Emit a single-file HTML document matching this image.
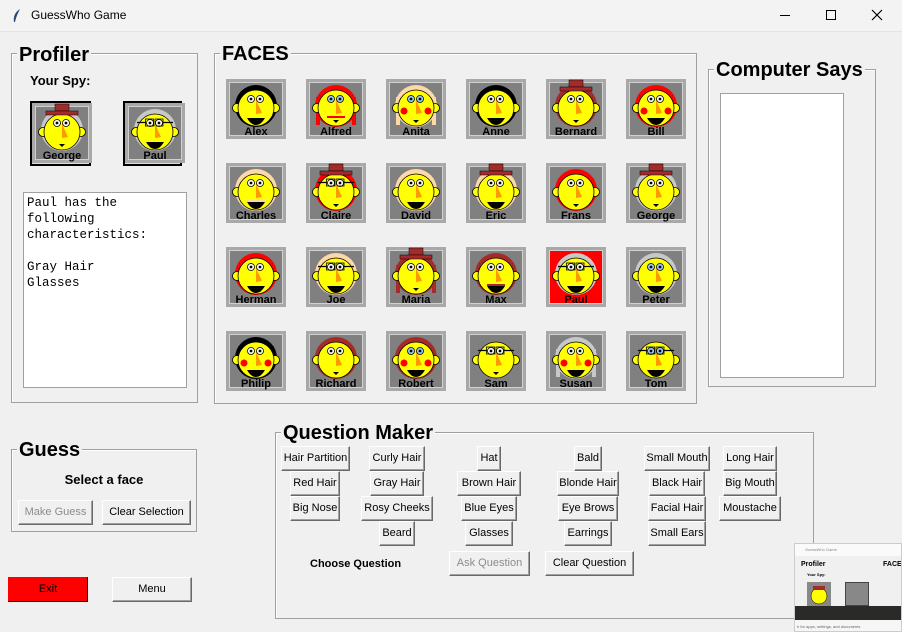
<!DOCTYPE html>
<html><head><meta charset="utf-8">
<style>
*{box-sizing:border-box}
body{margin:0;width:902px;height:632px;background:#f0f0f0;font-family:"Liberation Sans",sans-serif;position:relative;overflow:hidden}
.a{position:absolute}
.title{left:0;top:0;width:902px;height:32px;background:#f3f3f3;border-bottom:1px solid #e4e4e4}
.frame{position:absolute;border:1px solid #a0a0a0;box-shadow:inset 1px 1px 0 #fff}
.lbl{position:absolute;font-weight:bold;font-size:20px;background:#f0f0f0;padding:0 2px;line-height:20px;color:#000}
.btn{position:absolute;height:25px;font-size:11px;line-height:22px;text-align:center;background:#f0f0f0;border:1px solid;border-color:#fff #696969 #696969 #fff;box-shadow:inset -1px -1px 0 #a0a0a0;white-space:nowrap;color:#000;overflow:hidden}
.dis{color:#8c8c8c}
.tile{position:absolute;width:60px;height:60px}
.b{font-weight:bold;font-size:13px}
</style></head><body>
<div class="a title"></div>
<svg class="a" style="left:12px;top:8px" width="10" height="16" viewBox="0 0 10 16"><path d="M8 1 C3 4 1 9 2 14 L3 14 C4 9 6 5 8 1Z" fill="#2a4a7a"/></svg>
<div class="a" style="left:31px;top:8px;font-size:12px">GuessWho Game</div>
<div class="a" style="left:780px;top:15px;width:10px;height:1px;background:#000"></div>
<div class="a" style="left:826px;top:10px;width:10px;height:10px;border:1px solid #000"></div>
<svg class="a" style="left:871px;top:9px" width="12" height="12"><path d="M1 1L11 11M11 1L1 11" stroke="#000" stroke-width="1.2"/></svg>

<div class="frame" style="left:11px;top:53px;width:187px;height:350px"></div>
<div class="lbl" style="left:17px;top:45px">Profiler</div>
<div class="a b" style="left:30px;top:73px">Your Spy:</div>
<div id="spy1" class="a" style="left:30px;top:101px;width:61px;height:65px;border:2px solid #000;background:#ddd"></div>
<div id="spy2" class="a" style="left:123px;top:101px;width:59px;height:65px;border:2px solid #000;background:#ddd"></div>
<div class="a" style="left:23px;top:192px;width:164px;height:196px;background:#fff;border:1px solid #a0a0a0;font-family:'Liberation Mono',monospace;font-size:12.5px;line-height:16px;padding:2px 3px;white-space:pre">Paul has the
following
characteristics:

Gray Hair
Glasses</div>

<div class="frame" style="left:214px;top:53px;width:483px;height:351px"></div>
<div class="lbl" style="left:220px;top:44px">FACES</div>
<div id="grid"></div>

<div class="frame" style="left:708px;top:69px;width:168px;height:318px"></div>
<div class="lbl" style="left:714px;top:60px">Computer Says</div>
<div class="a" style="left:720px;top:93px;width:124px;height:285px;background:#fff;border:1px solid #a0a0a0"></div>

<div class="frame" style="left:11px;top:449px;width:186px;height:83px"></div>
<div class="lbl" style="left:17px;top:440px">Guess</div>
<div class="a b" style="left:11px;width:186px;top:472px;text-align:center">Select a face</div>
<div class="btn dis" style="left:18px;top:500px;width:75px">Make Guess</div>
<div class="btn" style="left:102px;top:500px;width:89px">Clear Selection</div>
<div class="btn" style="left:8px;top:577px;width:80px;background:#f00;border-color:#f00 #000 #000 #f00;box-shadow:none">Exit</div>
<div class="btn" style="left:112px;top:577px;width:80px">Menu</div>

<div class="frame" style="left:275px;top:432px;width:539px;height:187px"></div>
<div class="lbl" style="left:281px;top:423px">Question Maker</div>
<div id="qm"></div>
<div class="a" style="left:310px;top:558px;font-size:11px;font-weight:bold">Choose Question</div>
<div class="btn dis" style="left:449px;top:551px;width:81px">Ask Question</div>
<div class="btn" style="left:545px;top:551px;width:89px">Clear Question</div>

<div class="a" style="left:794px;top:543px;width:108px;height:89px;background:#f0f0f0;border:1px solid #ccc;overflow:hidden">
<div class="a" style="left:0;top:0;width:108px;height:12px;background:#fafafa;font-size:4px;padding:3px 10px;color:#888">GuessWho Game</div>
<div class="a" style="left:6px;top:17px;font-size:7px;font-weight:bold">Profiler</div>
<div class="a" style="left:12px;top:28px;font-size:4px;font-weight:bold">Your Spy:</div>
<div class="a" style="left:12px;top:38px;width:24px;height:24px;background:#888"><svg width="24" height="24"><circle cx="12" cy="14" r="8" fill="#ff0" stroke="#000" stroke-width=".5"/><rect x="6" y="4" width="12" height="4" fill="#a52a2a"/></svg></div>
<div class="a" style="left:50px;top:38px;width:24px;height:24px;background:#888;border:1px solid #444"></div>
<div class="a" style="left:88px;top:17px;font-size:7px;font-weight:bold">FACE</div>
<div class="a" style="left:0;top:62px;width:108px;height:14px;background:#2a2a28"></div>
<div class="a" style="left:0;top:76px;width:108px;height:13px;background:#f6f6f6;font-size:4px;padding:4px 2px;color:#666">h for apps, settings, and documents</div>
</div>

<script>
function face(n,o){o=o||{};
var hair=o.h,s='';
var bg=o.bg||'#808080';
s+='<rect x="0" y="0" width="60" height="60" fill="#a8a8a8"/><rect x="3" y="3" width="54" height="54" fill="#d0d0d0"/><rect x="4" y="4" width="52" height="52" fill="'+bg+'"/>';
if(hair&&o.long) s+='<rect x="10" y="18" width="4" height="28" fill="'+hair+'"/><rect x="46" y="18" width="4" height="28" fill="'+hair+'"/>';
if(hair) s+='<circle cx="30" cy="27" r="21" fill="'+hair+'"/>';
s+='<circle cx="11" cy="29" r="4.5" fill="#ff0" stroke="#000" stroke-width=".8"/><circle cx="49" cy="29" r="4.5" fill="#ff0" stroke="#000" stroke-width=".8"/>';
s+='<circle cx="30" cy="29" r="18" fill="#ff0" stroke="#000" stroke-width=".8"/>';
if(o.hat) s+='<rect x="23" y="1" width="14" height="7" fill="#a52a2a" stroke="#000" stroke-width=".5"/><rect x="14" y="8" width="32" height="4" fill="#a52a2a" stroke="#000" stroke-width=".5"/>';
if(o.cheek) s+='<circle cx="18" cy="32" r="3.5" fill="#f00"/><circle cx="42" cy="32" r="3.5" fill="#f00"/>';
var ec=o.blue?'#9cf':'#fff';
s+='<circle cx="25" cy="20" r="3.5" fill="'+ec+'" stroke="#000" stroke-width=".8"/><circle cx="25" cy="20" r="1.4"/><circle cx="34" cy="20" r="3.5" fill="'+ec+'" stroke="#000" stroke-width=".8"/><circle cx="34" cy="20" r="1.4"/>';
if(o.gl) s+='<rect x="20.5" y="16" width="8" height="7" fill="none" stroke="#000" stroke-width=".8"/><rect x="30" y="16" width="8" height="7" fill="none" stroke="#000" stroke-width=".8"/><path d="M12 19.5H20.5M38 19.5H48" stroke="#000" stroke-width="1.3"/>';
s+='<path d="M30 21L36 34L30 35Z" fill="#f90"/>';
if(o.mous) s+='<rect x="21" y="37" width="18" height="2" fill="'+(o.mous)+'"/>';
if(o.small) s+='<path d="M27 41H33L30 44Z"/>';
else s+='<path d="M21 39H39Q35 46 30 46Q25 46 21 39Z"/>';
s+='<text x="30" y="56" text-anchor="middle" font-family="Liberation Sans,sans-serif" font-weight="bold" font-size="11" fill="#000">'+n+'</text>';
return '<svg width="60" height="60" viewBox="0 0 60 60">'+s+'</svg>';}
var K='#000',R='#f00',P='#fdd8a8',B='#a52a2a',G='#c8c8c8';
var F=[
['Alex',{h:K}],['Alfred',{h:R,long:1,blue:1,mous:R,small:1}],['Anita',{h:P,long:1,blue:1,cheek:1,small:1}],['Anne',{h:K}],['Bernard',{h:B,hat:1,small:1}],['Bill',{h:R,cheek:1}],
['Charles',{h:P,mous:P}],['Claire',{h:R,hat:1,gl:1,small:1}],['David',{h:P}],['Eric',{h:'#fdd8a8',hat:1}],['Frans',{h:R,small:1}],['George',{h:G,hat:1,small:1}],
['Herman',{h:R}],['Joe',{h:P,gl:1}],['Maria',{h:B,hat:1,long:1,small:1}],['Max',{h:B,mous:B}],['Paul',{h:G,gl:1,bg:'#f00'}],['Peter',{h:G,blue:1}],
['Philip',{h:K,cheek:1}],['Richard',{h:B,small:1}],['Robert',{h:B,blue:1,cheek:1}],['Sam',{gl:1,small:1}],['Susan',{h:G,long:1,cheek:1}],['Tom',{gl:1,blue:1}]];
var g='';F.forEach(function(f,i){g+='<div class="tile" style="left:'+(226+80*(i%6))+'px;top:'+(79+84*Math.floor(i/6))+'px">'+face(f[0],f[1])+'</div>';});
document.getElementById('grid').innerHTML=g;
document.getElementById('spy1').innerHTML=face('George',F[11][1]);
document.getElementById('spy2').innerHTML=face('Paul',{h:G,gl:1});
var Q=[[315,['Hair Partition','Red Hair','Big Nose'],[69,50,50]],[397,['Curly Hair','Gray Hair','Rosy Cheeks','Beard'],[56,54,72,36]],[489,['Hat','Brown Hair','Blue Eyes','Glasses'],[24,64,56,48]],[588,['Bald','Blonde Hair','Eye Brows','Earrings'],[28,62,60,48]],[677,['Small Mouth','Black Hair','Facial Hair','Small Ears'],[66,56,58,58]],[750,['Long Hair','Big Mouth','Moustache'],[54,54,62]]];
var q='';Q.forEach(function(c){c[1].forEach(function(t,j){var w=c[2][j];q+='<div class="btn" style="left:'+Math.round(c[0]-w/2)+'px;top:'+(446+25*j)+'px;width:'+w+'px">'+t+'</div>';});});
document.getElementById('qm').innerHTML=q;
</script>
</body></html>
